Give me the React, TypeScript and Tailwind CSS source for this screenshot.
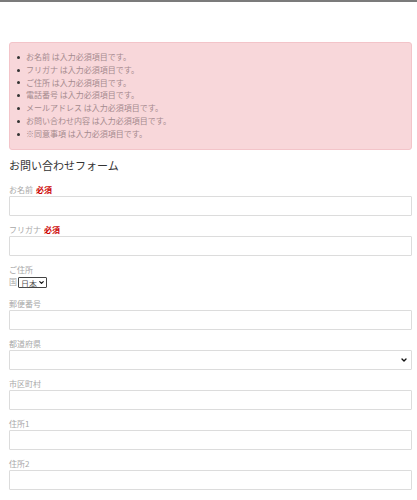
import { ChevronDown } from "lucide-react";

const errors = [
  "お名前",
  "フリガナ",
  "ご住所",
  "電話番号",
  "メールアドレス",
  "お問い合わせ内容",
  "※同意事項",
];

const font = {
  fontFamily: '"Noto Sans CJK JP", "Noto Sans", "Liberation Sans", sans-serif',
};

function Label({ text, required }: { text: string; required?: boolean }) {
  return (
    <label className="block text-[8px] leading-[12px] h-[12px] text-[#a8a8a8]">
      {text}
      {required && <b className="ml-[3px] font-bold text-[#cc0000]">必須</b>}
    </label>
  );
}

function TextField({ text, required }: { text: string; required?: boolean }) {
  return (
    <div className="mb-[8px]">
      <Label text={text} required={required} />
      <input
        type="text"
        className="block w-full h-[20px] border border-[#dcdcdc] rounded-[1px] bg-white px-2 text-[9px] focus:outline-none"
      />
    </div>
  );
}

export default function App() {
  return (
    <div className="w-full min-h-[500px] bg-white" style={font}>
      <div className="h-[2px] bg-[#7b7b7b]" />

      <div className="pl-[9px] pr-[5px] pt-[40px]">
        {/* error summary */}
        <div className="border border-[#f3c4c9] bg-[#f8d7da] rounded-[3px] py-[8px] pl-[7px]">
          <ul className="text-[8px] leading-[12.8px] text-[#a58a8e]">
            {errors.map((e) => (
              <li key={e} className="flex items-center">
                <span className="w-[3px] h-[3px] rounded-full bg-[#333] ml-[0px] mr-[6px] shrink-0" />
                <span>{e} は入力必須項目です。</span>
              </li>
            ))}
          </ul>
        </div>

        <h2 className="mt-[7px] mb-[11px] text-[11px] leading-[16px] text-[#333]">
          お問い合わせフォーム
        </h2>

        <TextField text="お名前" required />
        <TextField text="フリガナ" required />

        <div className="mb-[9px]">
          <Label text="ご住所" />
          <div className="flex items-center h-[13px] text-[8px] text-[#a8a8a8]">
            <span>国</span>
            <div className="relative ml-[1px] h-[11px] w-[29px] border border-[#444] rounded-[1px] bg-white">
              <select className="appearance-none w-full h-full pl-[2px] text-[8px] leading-[9px] text-[#555] bg-transparent focus:outline-none">
                <option>日本</option>
              </select>
              <ChevronDown
                size={7}
                strokeWidth={4}
                className="pointer-events-none absolute right-[1px] top-[1px] text-[#111]"
              />
            </div>
          </div>
        </div>

        <TextField text="郵便番号" />

        <div className="mb-[8px]">
          <Label text="都道府県" />
          <div className="relative h-[20px] border border-[#dcdcdc] rounded-[1px] bg-white">
            <select className="appearance-none w-full h-full px-2 text-[9px] bg-transparent focus:outline-none">
              <option></option>
            </select>
            <ChevronDown
              size={8}
              strokeWidth={4}
              className="pointer-events-none absolute right-[3px] top-[5px] text-[#111]"
            />
          </div>
        </div>

        <TextField text="市区町村" />
        <TextField text="住所1" />
        <TextField text="住所2" />
      </div>
    </div>
  );
}
